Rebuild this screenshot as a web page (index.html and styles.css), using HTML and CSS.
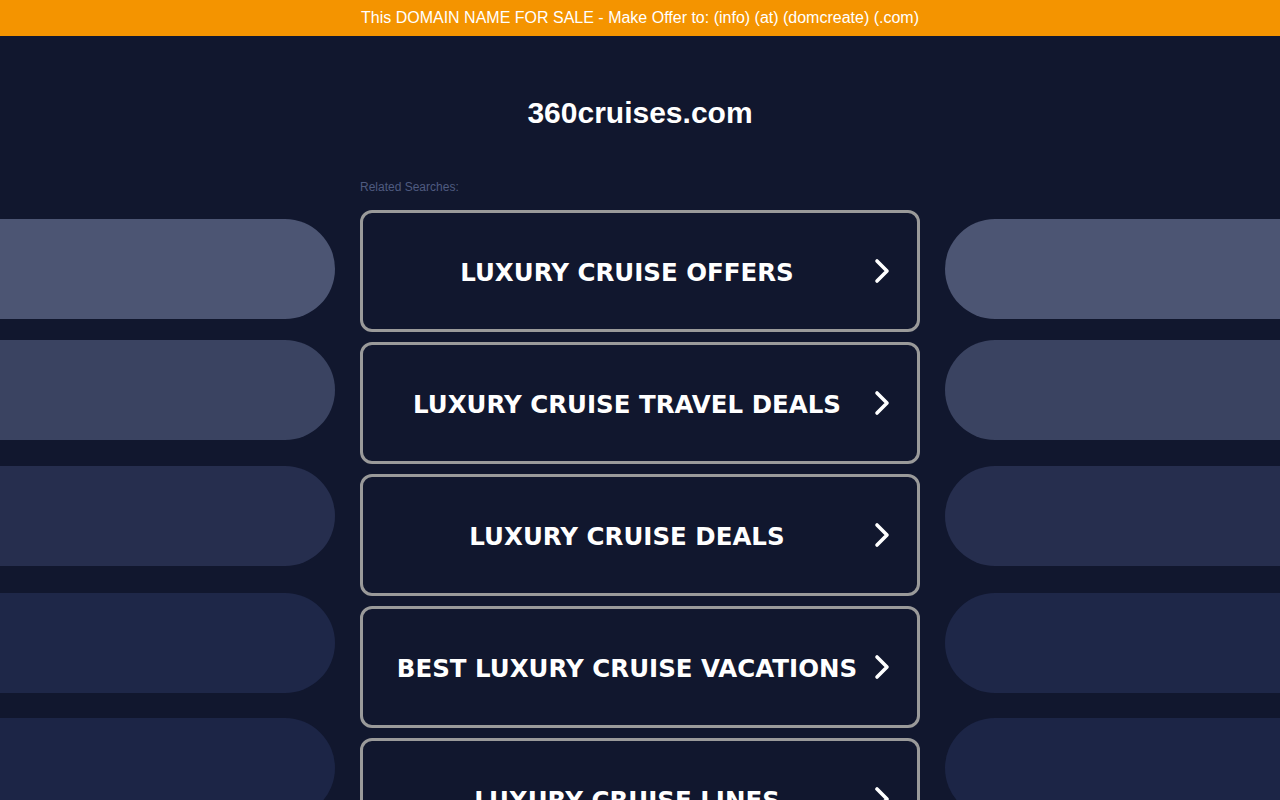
FILE: index.html
```html
<!DOCTYPE html>
<html lang="en">
<head>
<meta charset="utf-8">
<title>360cruises.com</title>
<link rel="stylesheet" href="styles.css">
</head>
<body>
<div class="sale-bar">This DOMAIN NAME FOR SALE - Make Offer to: (info) (at) (domcreate) (.com)</div>
<header class="site-header">
  <h1 class="domain">360cruises.com</h1>
</header>
<div class="layout">
  <div class="side side-left">
    <div class="pill pill-1"></div>
    <div class="pill pill-2"></div>
    <div class="pill pill-3"></div>
    <div class="pill pill-4"></div>
    <div class="pill pill-5"></div>
  </div>
  <main class="center">
    <div class="related">Related Searches:</div>
    <ul class="links">
      <li><a class="link" href="#"><span class="label">LUXURY CRUISE OFFERS</span><svg class="chev" viewBox="0 0 20 28" width="20" height="28"><path d="M5 4 L15 14 L5 24" fill="none" stroke="#fff" stroke-width="3.6" stroke-linecap="round" stroke-linejoin="round"/></svg></a></li>
      <li><a class="link" href="#"><span class="label">LUXURY CRUISE TRAVEL DEALS</span><svg class="chev" viewBox="0 0 20 28" width="20" height="28"><path d="M5 4 L15 14 L5 24" fill="none" stroke="#fff" stroke-width="3.6" stroke-linecap="round" stroke-linejoin="round"/></svg></a></li>
      <li><a class="link" href="#"><span class="label">LUXURY CRUISE DEALS</span><svg class="chev" viewBox="0 0 20 28" width="20" height="28"><path d="M5 4 L15 14 L5 24" fill="none" stroke="#fff" stroke-width="3.6" stroke-linecap="round" stroke-linejoin="round"/></svg></a></li>
      <li><a class="link" href="#"><span class="label">BEST LUXURY CRUISE VACATIONS</span><svg class="chev" viewBox="0 0 20 28" width="20" height="28"><path d="M5 4 L15 14 L5 24" fill="none" stroke="#fff" stroke-width="3.6" stroke-linecap="round" stroke-linejoin="round"/></svg></a></li>
      <li><a class="link" href="#"><span class="label">LUXURY CRUISE LINES</span><svg class="chev" viewBox="0 0 20 28" width="20" height="28"><path d="M5 4 L15 14 L5 24" fill="none" stroke="#fff" stroke-width="3.6" stroke-linecap="round" stroke-linejoin="round"/></svg></a></li>
    </ul>
  </main>
  <div class="side side-right">
    <div class="pill pill-1"></div>
    <div class="pill pill-2"></div>
    <div class="pill pill-3"></div>
    <div class="pill pill-4"></div>
    <div class="pill pill-5"></div>
  </div>
</div>
</body>
</html>
```

FILE: styles.css
```css
html, body {
  margin: 0;
  padding: 0;
  background: #11172e;
  height: 800px;
  overflow: hidden;
}
body {
  font-family: "Liberation Sans", Arial, sans-serif;
  color: #fff;
}
.sale-bar {
  height: 36px;
  line-height: 36px;
  background: #f49400;
  color: #fff;
  text-align: center;
  font-size: 16px;
}
.site-header {
  height: 134px;
  display: flex;
  justify-content: center;
}
.domain {
  margin: 58px 0 0;
  font-size: 30px;
  line-height: 38px;
  font-weight: bold;
  color: #fff;
}
.layout {
  display: grid;
  grid-template-columns: 1fr 560px 1fr;
  column-gap: 25px;
}
.side {
  padding-top: 49px;
  display: flex;
  flex-direction: column;
}
.pill {
  height: 100px;
}
.pill-2 { margin-top: 21px; }
.pill-3 { margin-top: 26px; }
.pill-4 { margin-top: 27px; }
.pill-5 { margin-top: 25px; }
.side-left .pill { border-radius: 0 50px 50px 0; }
.side-right .pill { border-radius: 50px 0 0 50px; }
.pill-1 { background: #4c5573; }
.pill-2 { background: #3a4361; }
.pill-3 { background: #262e4e; }
.pill-4 { background: #1e2748; }
.pill-5 { background: #1c2546; }
.related {
  font-size: 12px;
  line-height: 14px;
  color: #4f5b80;
  margin-top: 10px;
  height: 30px;
}
.links {
  list-style: none;
  margin: 0;
  padding: 0;
  display: flex;
  flex-direction: column;
  gap: 10px;
}
.link {
  box-sizing: border-box;
  height: 122px;
  border: 3px solid #9a9a9a;
  border-radius: 12px;
  display: flex;
  align-items: center;
  justify-content: center;
  text-decoration: none;
  color: #fff;
  position: relative;
  padding: 2px 46px 0 20px;
}
.label {
  font-family: "DejaVu Sans", sans-serif;
  font-weight: bold;
  font-size: 24.5px;
  white-space: nowrap;
  color: #fff;
}
.chev {
  position: absolute;
  right: 25px;
  top: 50%;
  margin-top: -14px;
}
```
